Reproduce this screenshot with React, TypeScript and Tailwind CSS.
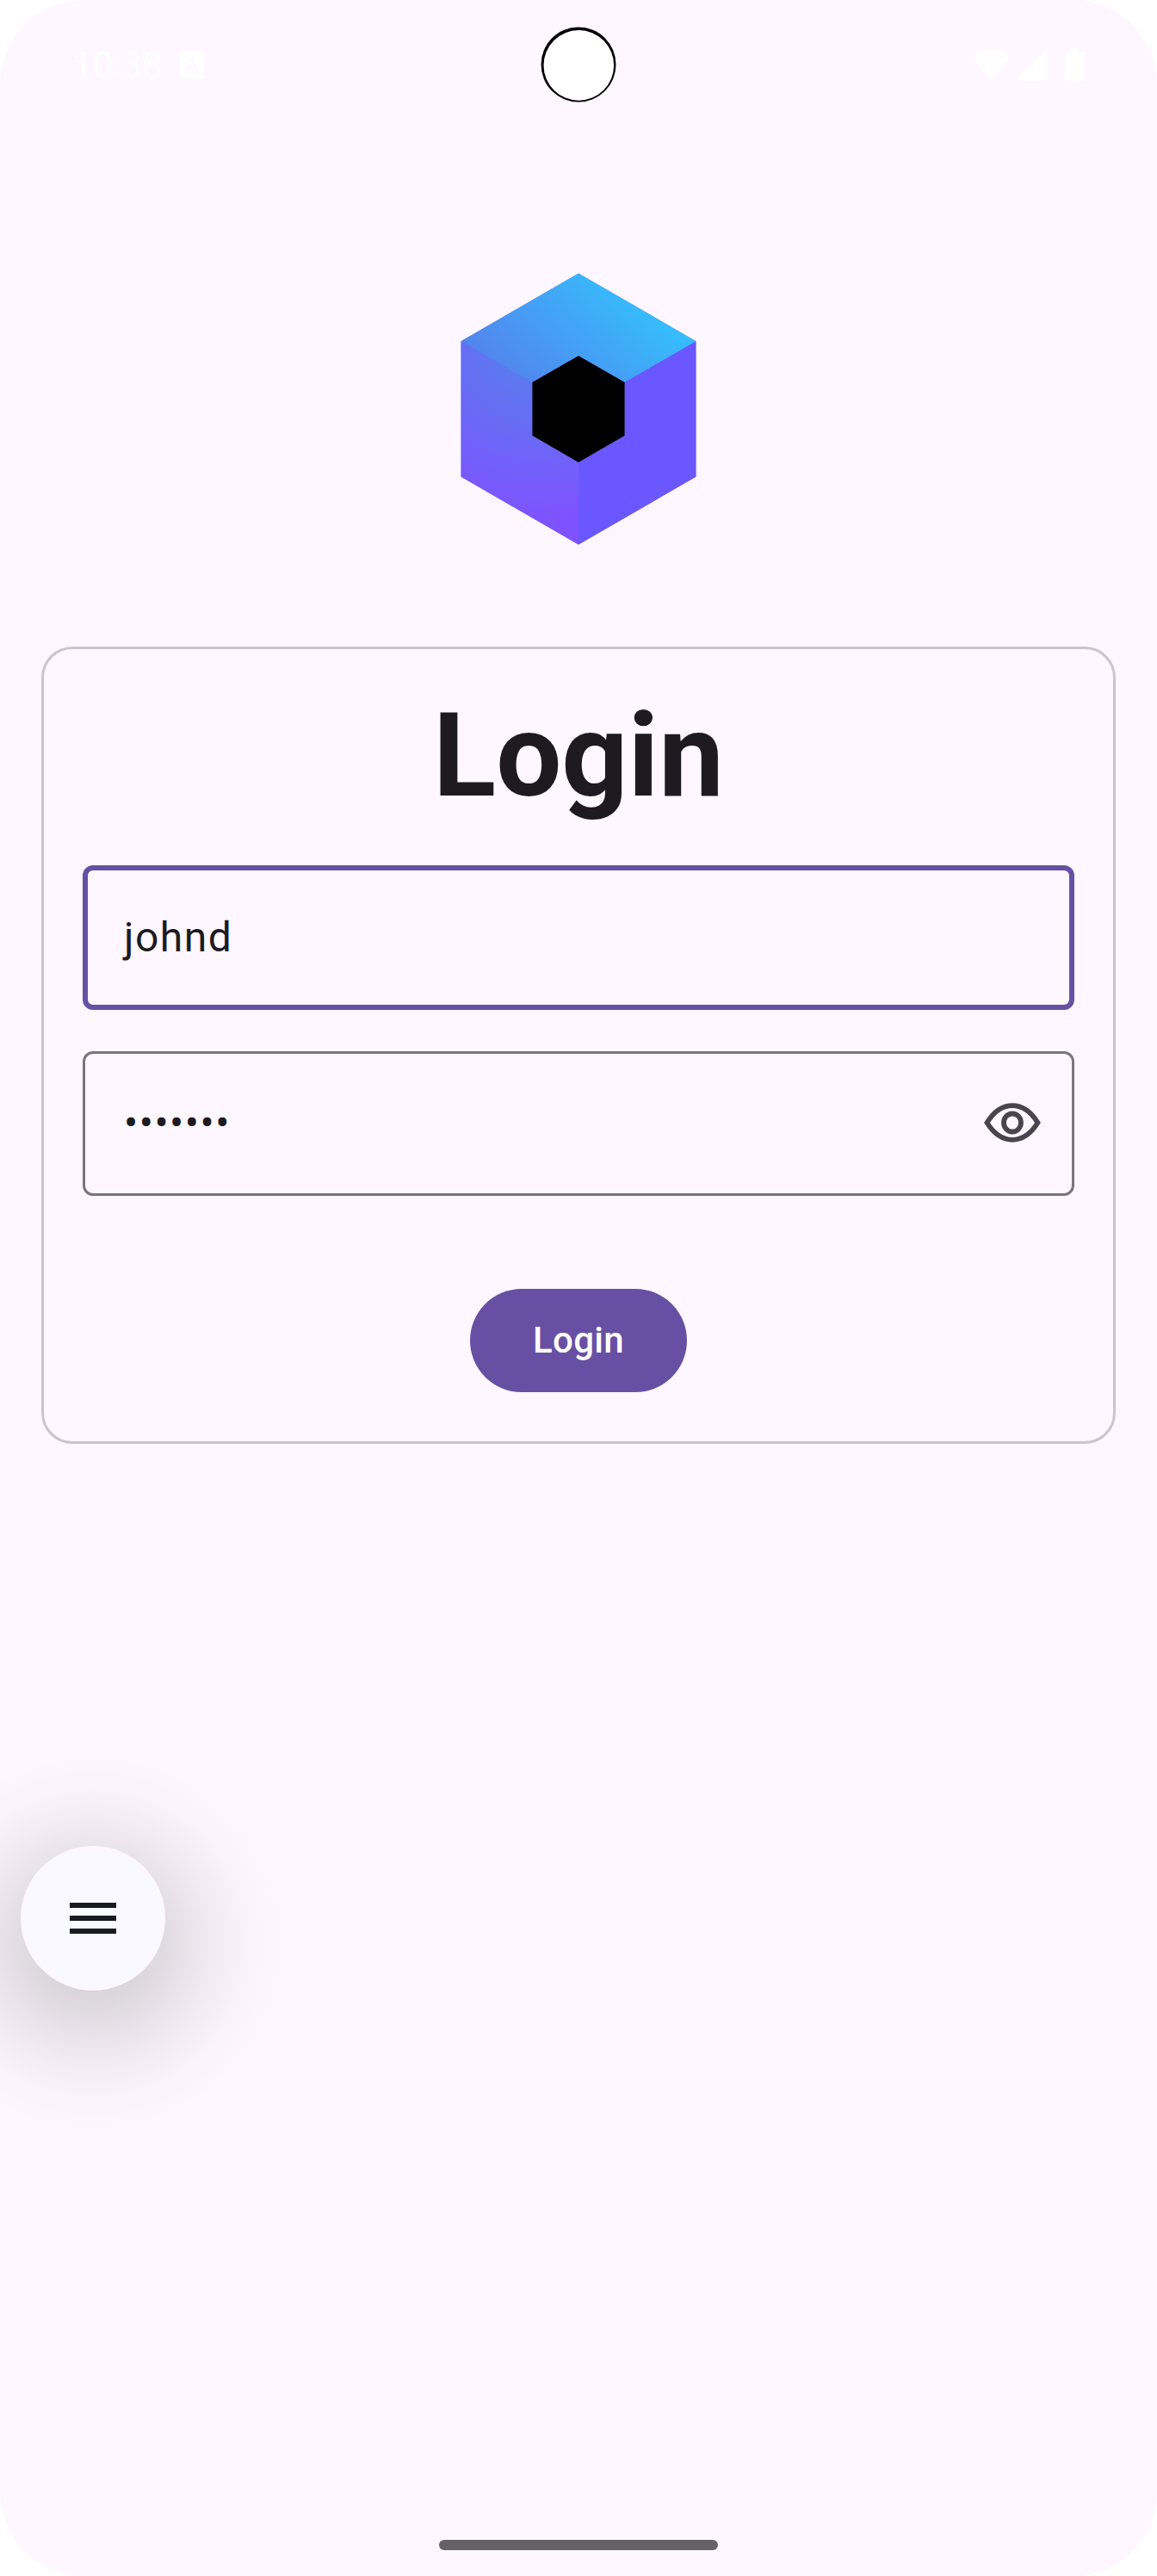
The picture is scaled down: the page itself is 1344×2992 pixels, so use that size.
function Logo() {
  return (
    <svg className="size-[360px]" viewBox="0 0 64 64">
      <defs>
        <radialGradient id="left" gradientUnits="userSpaceOnUse" cx="23.131" cy="18.441" r="42.132">
          <stop offset="0" stopColor="#5383EC" />
          <stop offset="0.867" stopColor="#7F52FF" />
        </radialGradient>
        <linearGradient id="top" gradientUnits="userSpaceOnUse" x1="44.172" y1="4.377" x2="17.973" y2="34.035">
          <stop offset="0" stopColor="#33C3FF" />
          <stop offset="0.878" stopColor="#5383EC" />
        </linearGradient>
      </defs>
      <path d="M56.25 18V46L32 60 7.75 46V18L32 4Z" fill="#6075F2" />
      <path d="m41.5 26.5v11L32 43V60L56.25 46V18Z" fill="#6B57FF" />
      <path d="m32 43-9.5-5.5v-11L7.75 18V46L32 60Z" fill="url(#left)" />
      <path d="M22.5 26.5 32 21 41.5 26.5 56.25 18 32 4 7.75 18Z" fill="url(#top)" />
      <path d="m32 21 9.526 5.5v11L32 43 22.474 37.5v-11z" fill="#000" />
    </svg>
  );
}

function StatusBar() {
  return (
    <header className="relative flex h-[150px] items-center justify-between pl-[84px] pr-[84px] text-white">
      <div className="flex items-center">
        <span className="pt-[2px] text-[42px] leading-[50px]">10:38</span>
        <svg className="ml-[20px] h-[31px] w-[28px]" viewBox="0 0 28 31">
          <rect width="28" height="31" rx="3" fill="#fff" />
          <path d="M8.5 22.500 13.500 9h1L19.500 22.500M10.500 18.500h7" fill="none" stroke="#FEF7FF" strokeWidth="3" />
          <path d="M15 27h2M19.500 27h2M24 27h2" stroke="#FEF7FF" strokeWidth="2" />
        </svg>
      </div>
      <div className="flex items-center">
        <svg className="h-[38px] w-[45px]" viewBox="0 0 45 38" fill="#fff">
          <path d="M0 10Q22.500-9 45 10L22.500 38Z" />
        </svg>
        <svg className="ml-[4px] h-[38px] w-[38px]" viewBox="0 0 38 38" fill="#fff">
          <path d="M38 0V36q0 2-2 2H0Z" />
        </svg>
        <svg className="ml-[21px] h-[39px] w-[23px]" viewBox="0 0 23 39" fill="#fff">
          <path d="M7 0H16V4H20q3 0 3 3V36q0 3-3 3H3q-3 0-3-3V7q0-3 3-3H7Z" />
        </svg>
      </div>
      <svg className="absolute left-[627px] top-[30px] size-[90px]" viewBox="0 0 90 90">
        <circle cx="45" cy="45" r="43.500" fill="#000" />
        <circle cx="45.300" cy="45.900" r="40.800" fill="#fff" />
      </svg>
    </header>
  );
}

function EyeIcon() {
  return (
    <svg className="mb-[3px] h-[48px] w-[68px]" viewBox="-34 -24 68 48" fill="none" stroke="#49454F" strokeWidth="5.800">
      <path d="M-29.500 0C-22-12-12-19.800 0-19.800S22-12 29.500 0C22 12 12 19.800 0 19.800S-22 12-29.500 0Z" />
      <ellipse rx="10" ry="10.500" />
    </svg>
  );
}

function MenuButton() {
  return (
    <div className="relative ml-[24px] mt-[467px] size-[168px] shrink-0">
      {/* Soft elevation shadow, dropped below the button */}
      <div className="absolute left-[-156px] top-[-127px] size-[480px] bg-[radial-gradient(circle_240px_at_center,rgba(0,0,0,0.175)_0px,rgba(0,0,0,0.165)_30px,rgba(0,0,0,0.142)_56px,rgba(0,0,0,0.114)_84px,rgba(0,0,0,0.084)_110px,rgba(0,0,0,0.056)_135px,rgba(0,0,0,0.034)_159px,rgba(0,0,0,0.017)_182px,rgba(0,0,0,0.007)_208px,rgba(0,0,0,0)_240px)]" />
      <button className="relative flex size-full flex-col items-center justify-center gap-[9px] rounded-full bg-[#F9F9FF]">
        <span className="h-[6px] w-[54px] bg-[#1A1B20]" />
        <span className="h-[6px] w-[54px] bg-[#1A1B20]" />
        <span className="h-[6px] w-[54px] bg-[#1A1B20]" />
      </button>
    </div>
  );
}

export default function App() {
  return (
    <div className="h-[2992px] w-[1344px] overflow-hidden bg-white font-['Roboto',sans-serif]">
      <div className="flex h-full flex-col overflow-hidden rounded-[98px] bg-[#FEF7FF] text-[#1D1B20]">
        <StatusBar />
        <main className="flex flex-col px-[48px] pt-[145px]">
          <div className="flex justify-center">
            <Logo />
          </div>
          <section className="mt-[96px] flex h-[926px] flex-col items-center rounded-[36px] border-[3px] border-[#CAC4D0] px-[45px] pt-[45px]">
            <h1 className="h-[206px] text-[135px] font-bold leading-[158px]">Login</h1>
            <div className="flex h-[168px] w-full items-center rounded-[12px] border-[6px] border-[#6750A4] px-[42px] text-[48px] leading-[72px] tracking-[1.5px]">
              johnd
            </div>
            <div className="mt-[48px] flex h-[168px] w-full items-center justify-between rounded-[12px] border-[3px] border-[#79747E] pl-[45px] pr-[35px] text-[48px] leading-[72px] tracking-[1.5px]">
              <span>•••••••</span>
              <EyeIcon />
            </div>
            <button className="mt-[108px] h-[120px] w-[252px] rounded-full bg-[#6750A4] text-[42px] font-medium leading-[60px] tracking-[0.3px] text-white">
              Login
            </button>
          </section>
        </main>
        <MenuButton />
        <div className="mx-auto mb-[30px] mt-auto h-[12px] w-[324px] rounded-full bg-[#656266]" />
      </div>
    </div>
  );
}
